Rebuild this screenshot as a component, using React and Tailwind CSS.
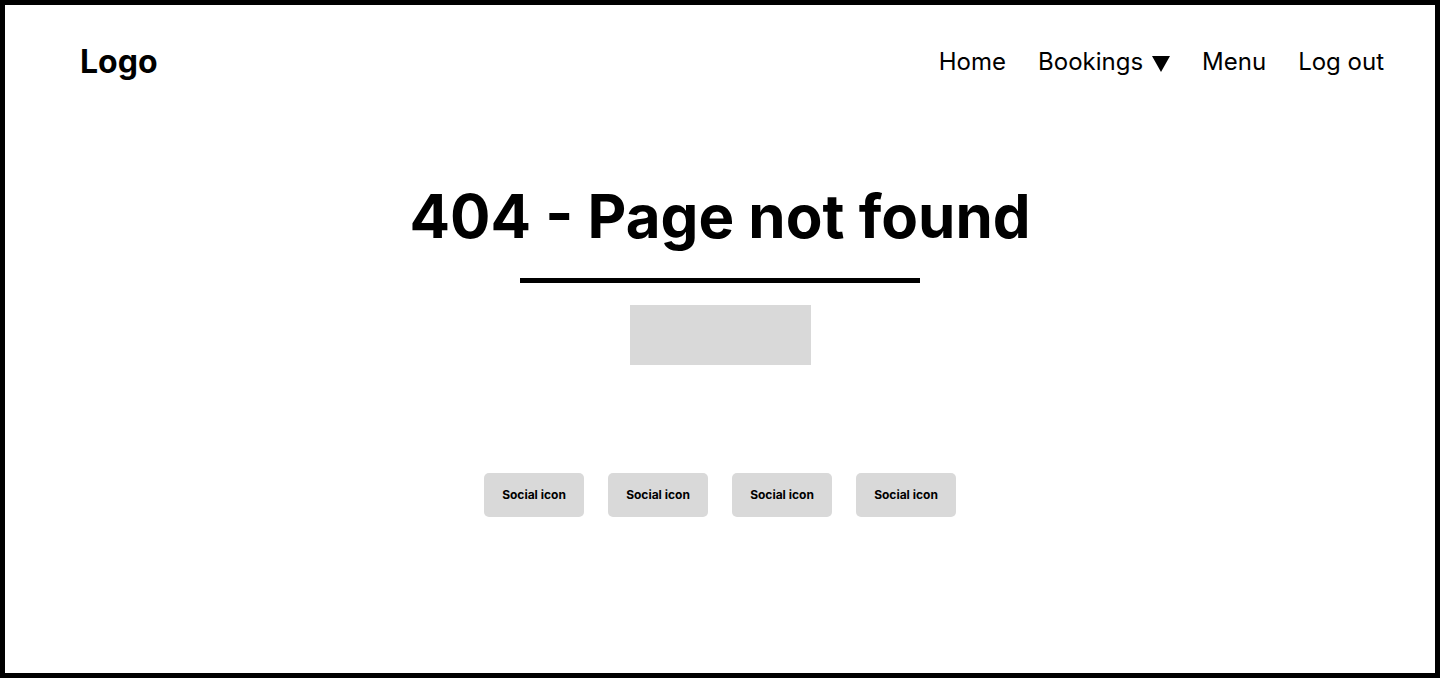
import React from 'react';

const navItems = ['Home', 'Bookings', 'Menu', 'Log out'];

const Header = () => (
  <header className="flex items-center justify-between pl-[75px] pr-[51px] pt-[33px]">
    <div className="text-[32px] font-bold leading-[48px] text-black">Logo</div>
    <nav className="flex items-center gap-[32px] text-[24px] leading-[48px] text-black">
      {navItems.map((item) => (
        <a key={item} href="#" className="flex items-center">
          {item}
          {item === 'Bookings' && (
            <svg className="ml-[9px] mt-[4px] h-[16px] w-[18px]" viewBox="0 0 18 16">
              <path d="M0 0 H18 L9 16 Z" fill="black" />
            </svg>
          )}
        </a>
      ))}
    </nav>
  </header>
);

const App = () => {
  return (
    <div
      className="h-[678px] w-[1440px] border-[5px] border-black bg-white"
      style={{ fontFamily: 'Inter, "Noto Sans", sans-serif' }}
    >
      <Header />
      <main className="flex flex-col items-center">
        <h1 className="mt-[94px] text-[60px] font-bold leading-[72px] text-black">
          404 - Page not found
        </h1>
        <div className="mt-[26px] h-[5px] w-[400px] bg-black" />
        <div className="mt-[22px] h-[60px] w-[181px] bg-[#d9d9d9]" />
        <div className="mt-[108px] flex gap-[24px]">
          {[1, 2, 3, 4].map((i) => (
            <div
              key={i}
              className="flex h-[44px] w-[100px] items-center justify-center rounded-[5px] bg-[#d9d9d9] text-[12px] font-bold text-black"
            >
              Social icon
            </div>
          ))}
        </div>
      </main>
    </div>
  );
};

export default App;
